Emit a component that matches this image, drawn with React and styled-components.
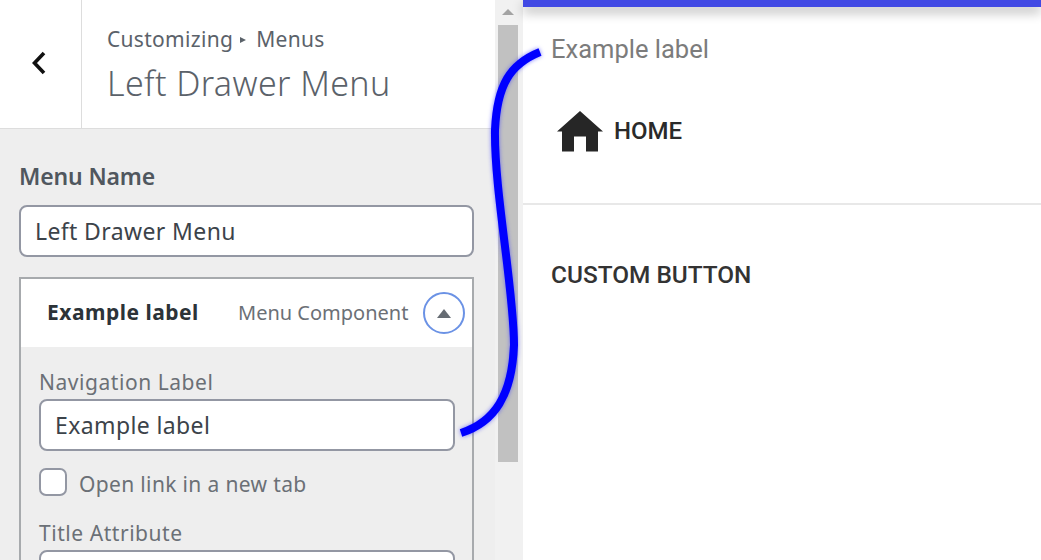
import React from "react";
import styled, { createGlobalStyle } from "styled-components";

const Global = createGlobalStyle`
  html, body { margin: 0; padding: 0; background: #fff; overflow: hidden; }
  * { box-sizing: border-box; }
`;
const Page = styled.div`
  position: relative; display: flex; width: 1041px; height: 560px; overflow: hidden;
  font-family: "Noto Sans", "Open Sans", sans-serif;
`;
const Sidebar = styled.aside`
  width: 495px; height: 560px; display: flex; flex-direction: column; background: #eee; overflow: hidden;
`;
const Header = styled.header`
  height: 129px; flex: none; display: flex; background: #fff; border-bottom: 1px solid #ddd;
`;
const BackCell = styled.div`
  width: 82px; display: flex; align-items: center; justify-content: center;
  border-right: 1px solid #ddd; padding-right: 3px; padding-bottom: 2px;
`;
const Titles = styled.div`
  padding: 25px 0 0 25px;
`;
const Crumb = styled.div`
  font-size: 21px; line-height: 28px; color: #5b626a; letter-spacing: 0.3px; display: flex; align-items: center;
`;
const CrumbArrow = styled.span`
  width: 0; height: 0; margin: 2px 10px 0 7px; border-left: 6px solid #5b626a; border-top: 3.5px solid transparent; border-bottom: 3.5px solid transparent;
`;
const Title = styled.h1`
  margin: 8px 0 0; font-size: 34px; line-height: 44px; font-weight: 300; color: #5b626a; letter-spacing: 0.4px; white-space: nowrap;
`;
const Body = styled.div`
  padding: 32px 21px 0 19px;
`;
const NameLabel = styled.div`
  font-size: 23px; line-height: 30px; font-weight: 600; color: #50575e; letter-spacing: -0.15px; margin-bottom: 14px; padding-left: 0;
`;
const Field = styled.div`
  height: 52px; display: flex; align-items: center; padding: 0 14px; background: #fff; border: 2px solid #9397a3; border-radius: 8px;
  font-size: 23px; color: #3c434a; letter-spacing: 0.38px; white-space: nowrap; flex: none;
`;
const MenuItem = styled.section`
  margin-top: 20px; border: 2px solid #a7aaad; background: #eee; height: 400px;
`;
const ItemBar = styled.div`
  height: 68px; background: #fff; display: flex; align-items: center; padding-left: 26px;
`;
const ItemTitle = styled.div`
  font-size: 21px; font-weight: 700; color: #2c3338; letter-spacing: 0.5px; width: 191px; white-space: nowrap; margin-bottom: 2px;
`;
const ItemType = styled.div`
  font-size: 20px; color: #6b7076; letter-spacing: 0px; width: 185px; white-space: nowrap; margin-bottom: 2px;
`;
const Toggle = styled.div`
  width: 42px; height: 42px; border-radius: 50%; border: 2px solid #6b92e5; display: flex; align-items: center; justify-content: center; flex: none;
`;
const ToggleArrow = styled.span`
  width: 0; height: 0; border-left: 7px solid transparent; border-right: 7px solid transparent; border-bottom: 9px solid #666c73;
`;
const ItemBody = styled.div`
  padding: 22px 17px 0 18px;
`;
const FieldLabel = styled.div`
  font-size: 21px; line-height: 26px; color: #6b7076; letter-spacing: 0.55px; margin-bottom: 4px;
`;
const CheckRow = styled.div`
  display: flex; align-items: center; gap: 12px; height: 28px; margin: 17px 0 24px;
  font-size: 21px; color: #6b7076; letter-spacing: 0.35px;
`;
const CheckText = styled.span`
  padding-top: 3px;
`;
const Check = styled.span`
  width: 28px; height: 28px; background: #fff; border: 2px solid #9397a3; border-radius: 7px; flex: none;
`;
const Scrollbar = styled.div`
  width: 28px; height: 560px; flex: none; background: #f1f1f1; padding: 9px 5px 0 3px; display: flex; flex-direction: column;
`;
const ScrollUp = styled.span`
  width: 0; height: 0; align-self: center; border-left: 6.5px solid transparent; border-right: 6.5px solid transparent; border-bottom: 6px solid #a3a3a3;
`;
const ScrollThumb = styled.div`
  margin-top: 10px; height: 437px; background: #c1c1c1;
`;
const Preview = styled.main`
  flex: 1; min-width: 0; background: #fff; position: relative;
`;
const TopBar = styled.div`
  height: 7px; background: #4149e4; box-shadow: 0 5px 12px rgba(0,0,0,.32);
`;
const DrawerLabel = styled.div`
  padding: 27px 0 0 28px; font-family: Roboto, sans-serif; font-size: 25.5px; line-height: 30px; color: #7c7c7c;
`;
const HomeRow = styled.div`
  height: 141px; padding: 0 0 5px 34px; display: flex; align-items: center; gap: 11px; border-bottom: 2px solid #e8e8e8;
  font-family: Roboto, sans-serif; font-size: 24px; font-weight: 500; color: #2a2a2a;
`;
const CustomRow = styled.div`
  padding: 54px 0 0 28px; font-family: Roboto, sans-serif; font-size: 24.4px; line-height: 32px; font-weight: 500; color: #333;
`;
const Curve = styled.svg`
  position: absolute; left: 0; top: 0; width: 1041px; height: 560px; pointer-events: none; overflow: visible;
`;

export default function App() {
  return (
    <Page>
      <Global />
      <Sidebar>
        <Header>
          <BackCell>
            <svg width="18" height="26" viewBox="0 0 18 26" fill="none" stroke="#111" strokeWidth="3.6">
              <path d="M14 3 L4.5 13 L14 23" />
            </svg>
          </BackCell>
          <Titles>
            <Crumb>Customizing<CrumbArrow />Menus</Crumb>
            <Title>Left Drawer Menu</Title>
          </Titles>
        </Header>
        <Body>
          <NameLabel>Menu Name</NameLabel>
          <Field>Left Drawer Menu</Field>
          <MenuItem>
            <ItemBar>
              <ItemTitle>Example label</ItemTitle>
              <ItemType>Menu Component</ItemType>
              <Toggle><ToggleArrow /></Toggle>
            </ItemBar>
            <ItemBody>
              <FieldLabel>Navigation Label</FieldLabel>
              <Field>Example label</Field>
              <CheckRow><Check /><CheckText>Open link in a new tab</CheckText></CheckRow>
              <FieldLabel>Title Attribute</FieldLabel>
              <Field />
            </ItemBody>
          </MenuItem>
        </Body>
      </Sidebar>
      <Scrollbar>
        <ScrollUp />
        <ScrollThumb />
      </Scrollbar>
      <Preview>
        <TopBar />
        <DrawerLabel>Example label</DrawerLabel>
        <HomeRow>
          <svg width="46" height="41" viewBox="0 0 46 41" fill="#262626"><path d="M23 0 L46 20.5 H41 V40.5 H29 V25.5 H17 V40.5 H5 V20.5 H0 Z" /></svg>
          HOME
        </HomeRow>
        <CustomRow>CUSTOM BUTTON</CustomRow>
      </Preview>
      <Curve viewBox="0 0 1041 560">
        <path d="M540 52 C510 64 497 85 495 130 C494 190 514 290 514 345 C512 395 495 422 461 433" fill="none" stroke="#00f" strokeWidth="8" style={{ filter: "drop-shadow(0 0 2px rgba(70,70,255,.7))" }} />
      </Curve>
    </Page>
  );
}
